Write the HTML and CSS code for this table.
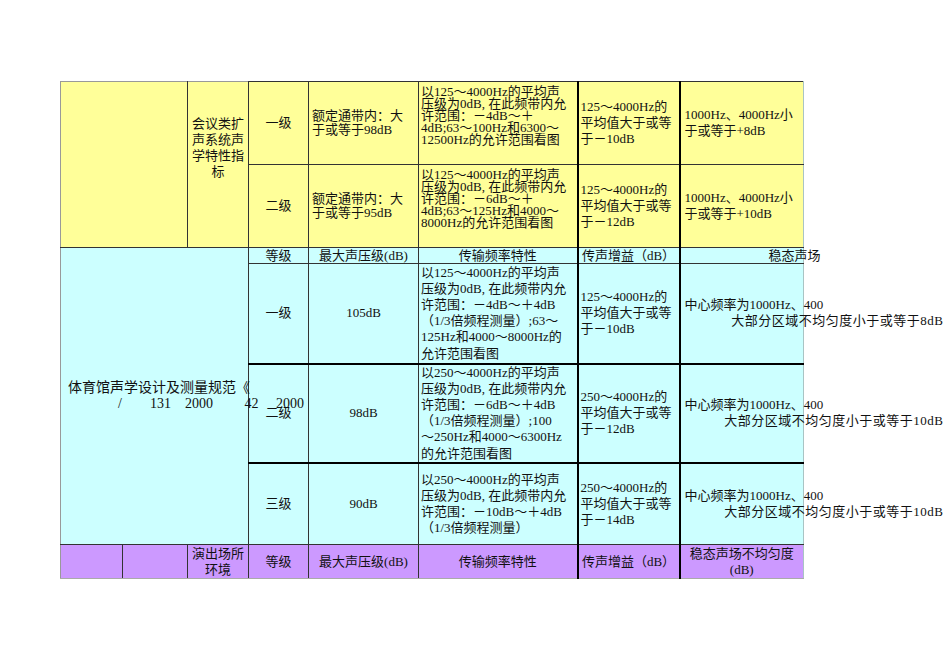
FILE: index.html
```html
<!DOCTYPE html>
<html lang="zh-CN">
<head>
<meta charset="utf-8">
<title>声学特性指标</title>
<link rel="stylesheet" href="styles.css">
</head>
<body>
<table class="sheet">
  <colgroup>
    <col class="c1"><col class="c2"><col class="c3"><col class="c4"><col class="c5"><col class="c6"><col class="c7"><col class="c8">
  </colgroup>
  <tr class="r1">
    <td colspan="2" rowspan="2" class="y edge-tl"></td>
    <td rowspan="2" class="y ctr cat edge-t">会议类扩<br>声系统声<br>学特性指<br>标</td>
    <td class="y ctr">一级</td>
    <td class="y spec">额定通带内：大<br>于或等于98dB</td>
    <td class="y fy">以125～4000Hz的平均声<br>压级为0dB, 在此频带内允<br>许范围：－4dB～＋<br>4dB;63～100Hz和6300～<br>12500Hz的允许范围看图</td>
    <td class="y gain tl">125～4000Hz的<br>平均值大于或等<br>于－10dB</td>
    <td class="y st tl edge-r">1000Hz、4000Hz小<br>于或等于+8dB</td>
  </tr>
  <tr class="r2">
    <td class="y ctr">二级</td>
    <td class="y spec">额定通带内：大<br>于或等于95dB</td>
    <td class="y fy">以125～4000Hz的平均声<br>压级为0dB, 在此频带内允<br>许范围：－6dB～＋<br>4dB;63～125Hz和4000～<br>8000Hz的允许范围看图</td>
    <td class="y gain tl">125～4000Hz的<br>平均值大于或等<br>于－12dB</td>
    <td class="y st tl edge-r">1000Hz、4000Hz小<br>于或等于+10dB</td>
  </tr>
  <tr class="r3">
    <td colspan="3" rowspan="4" class="c big edge-l">体育馆声学设计及测量规范《<span class="big2">/        131    2000         42     2000</span></td>
    <td class="c ctr hd">等级</td>
    <td class="c ctr hd">最大声压级(dB)</td>
    <td class="c ctr hd">传输频率特性</td>
    <td class="c ctr tl hd">传声增益（dB）</td>
    <td class="c tl st-h hd edge-r">稳态声场</td>
  </tr>
  <tr class="r4">
    <td class="c ctr">一级</td>
    <td class="c ctr">105dB</td>
    <td class="c freq">以125～4000Hz的平均声<br>压级为0dB, 在此频带内允<br>许范围：－4dB～＋4dB<br>（1/3倍频程测量）;63～<br>125Hz和4000～8000Hz的<br>允许范围看图</td>
    <td class="c gain tl">125～4000Hz的<br>平均值大于或等<br>于－10dB</td>
    <td class="c st tl edge-r">中心频率为1000Hz、400<span class="st2">大部分区域不均匀度小于或等于8dB</span></td>
  </tr>
  <tr class="r5">
    <td class="c ctr tt">二级</td>
    <td class="c ctr tt">98dB</td>
    <td class="c freq tt">以250～4000Hz的平均声<br>压级为0dB, 在此频带内允<br>许范围：－6dB～＋4dB<br>（1/3倍频程测量）;100<br>～250Hz和4000～6300Hz<br>的允许范围看图</td>
    <td class="c gain tl tt">250～4000Hz的<br>平均值大于或等<br>于－12dB</td>
    <td class="c st tl tt edge-r">中心频率为1000Hz、400<span class="st2">大部分区域不均匀度小于或等于10dB</span></td>
  </tr>
  <tr class="r6">
    <td class="c ctr tt">三级</td>
    <td class="c ctr tt">90dB</td>
    <td class="c freq tt">以250～4000Hz的平均声<br>压级为0dB, 在此频带内允<br>许范围：－10dB～＋4dB<br>（1/3倍频程测量）</td>
    <td class="c gain tl tt">250～4000Hz的<br>平均值大于或等<br>于－14dB</td>
    <td class="c st tl tt edge-r">中心频率为1000Hz、400<span class="st2">大部分区域不均匀度小于或等于10dB</span></td>
  </tr>
  <tr class="r7">
    <td class="p pr edge-l edge-b"></td>
    <td class="p pr edge-b"></td>
    <td class="p pr ctr edge-b">演出场所<br>环境</td>
    <td class="p pr ctr edge-b">等级</td>
    <td class="p pr ctr edge-b">最大声压级(dB)</td>
    <td class="p pr ctr edge-b">传输频率特性</td>
    <td class="p pr ctr tl edge-b">传声增益（dB）</td>
    <td class="p pr ctr tl edge-b edge-r">稳态声场不均匀度<br>(dB)</td>
  </tr>
</table>
</body>
</html>
```

FILE: styles.css
```css
body {
  margin: 0;
  background: #ffffff;
  font-family: "Liberation Serif", "Noto Sans CJK SC", serif;
  font-size: 13px;
  color: #111;
}

.sheet {
  border-collapse: collapse;
  table-layout: fixed;
  width: 743px;
  margin: 81px 0 0 60px;
}

.c1 { width: 62px; }
.c2 { width: 65px; }
.c3 { width: 61px; }
.c4 { width: 60px; }
.c5 { width: 110px; }
.c6 { width: 159px; }
.c7 { width: 102px; }
.c8 { width: 124px; }

.r1 { height: 83px; }
.r2 { height: 83px; }
.r3 { height: 16px; }
.r4 { height: 100px; }
.r5 { height: 99px; }
.r6 { height: 82px; }
.r7 { height: 34px; }

.sheet td {
  border: 1px solid #333;
  padding: 0 2px;
  vertical-align: middle;
  line-height: 16px;
  white-space: nowrap;
  overflow: visible;
  text-align: left;
}

.y { background: #ffff99; }
.c { background: #ccffff; }
.p { background: #cc99ff; }

.sheet td.ctr { text-align: center; }

.sheet td.tl { border-left: 2px solid #000; }
.sheet td.tt { border-top: 2px solid #000; }

.sheet td.edge-tl { border-top-color: #999; border-left-color: #999; }
.sheet td.edge-t { border-top-color: #999; }
.sheet td.edge-l { border-left-color: #999; }
.sheet td.edge-r { border-right-color: #a9c4c4; }
.sheet td.edge-b { border-bottom-color: #aaa; }

.sheet td.hd { line-height: 14px; }

.sheet td.pr { line-height: 15.5px; }

.sheet td.cat {
  padding-bottom: 34px;
  line-height: 16px;
}

.sheet td.spec {
  padding-left: 3px;
  line-height: 14px;
}

.sheet td.fy {
  vertical-align: top;
  padding-top: 4px;
  line-height: 12px;
}

.sheet td.freq { padding-left: 2px; line-height: 16.2px; }

.sheet td.gain { padding-left: 2px; line-height: 16px; }

.sheet td.st { padding-left: 4px; }

.sheet td.st-h { padding-left: 88px; }

.st2 {
  display: block;
  width: 259px;
  text-align: right;
  letter-spacing: 0.5px;
}

.sheet td.big {
  padding-left: 7px;
  font-size: 14px;
  line-height: 16.6px;
}

.big2 {
  display: block;
  white-space: pre;
  padding-left: 50px;
}
```
